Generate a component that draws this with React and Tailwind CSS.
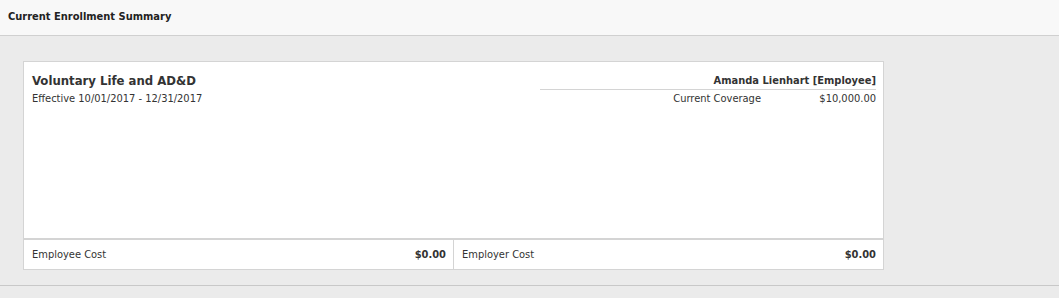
import React from "react";

const font = { fontFamily: "Tahoma, 'DejaVu Sans Condensed', 'DejaVu Sans', sans-serif" };

export default function App() {
  return (
    <div className="w-[1059px] h-[298px] bg-[#ebebeb] text-[#333] text-[11px]" style={font}>
      <div className="h-[36px] bg-[#f8f8f8] border-b border-[#d0d0d0] pl-[8px] pt-[9px] font-bold text-[11px] text-[#222]">
        Current Enrollment Summary
      </div>
      <div className="h-[250px] border-b border-[#c8c8c8] pl-[23px] pt-[25px]">
        <div className="w-[861px] h-[209px] bg-white border border-[#d4d4d4] flex flex-col">
          <div className="flex-1 flex justify-between pl-[8px] pr-[7px] pt-[11px]">
            <div>
              <div className="font-bold text-[13px] leading-[16px] text-[#333]">Voluntary Life and AD&amp;D</div>
              <div className="mt-[3px] leading-[14px]">Effective 10/01/2017 - 12/31/2017</div>
            </div>
            <div className="w-[336px]">
              <div className="text-right font-bold leading-[15px] border-b border-[#d4d4d4] pb-[1px]">
                Amanda Lienhart [Employee]
              </div>
              <div className="flex justify-end pt-[2px] leading-[14px] whitespace-nowrap">
                <span>Current Coverage</span>
                <span className="w-[115px] text-right">$10,000.00</span>
              </div>
            </div>
          </div>
          <div className="h-[31px] border-t-2 border-[#d4d4d4] flex">
            <div className="flex-1 flex items-center justify-between pl-[8px] pr-[7px] pt-[2px] border-r border-[#d4d4d4]">
              <span>Employee Cost</span>
              <span className="font-bold">$0.00</span>
            </div>
            <div className="flex-1 flex items-center justify-between pl-[8px] pr-[7px] pt-[2px]">
              <span>Employer Cost</span>
              <span className="font-bold">$0.00</span>
            </div>
          </div>
        </div>
      </div>
    </div>
  );
}
